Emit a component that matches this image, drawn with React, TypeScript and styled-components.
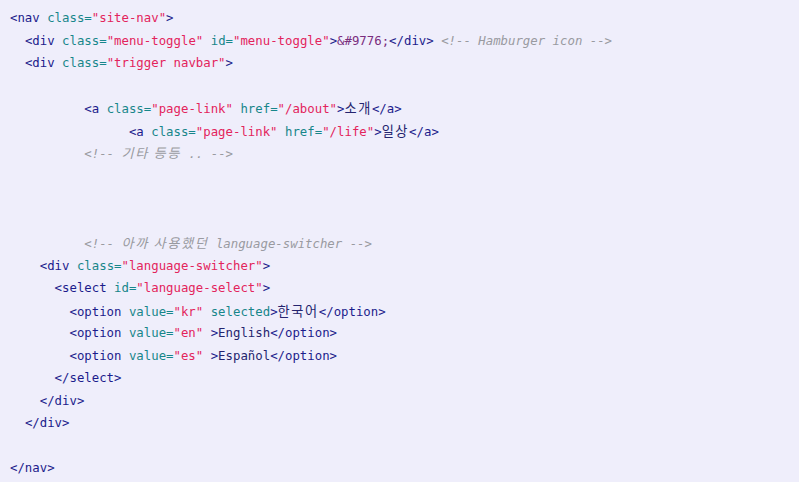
import React from "react";
import styled, { createGlobalStyle } from "styled-components";

const Global = createGlobalStyle`
  html, body { margin: 0; padding: 0; background: #efeefb; }
`;

const Pre = styled.pre`
  margin: 0;
  padding: 7px 10px 0 10px;
  min-height: 482px;
  box-sizing: border-box;
  background: #efeefb;
  font-family: "DejaVu Sans Mono", "Liberation Mono", "Noto Sans CJK KR", monospace;
  font-size: 12.35px;
  color: #1f1f7a;
`;

const Line = styled.div`
  height: 22.5px;
  line-height: 22.5px;
  white-space: pre;
`;

const Tag = styled.span`color: #1c1c8c;`;
const Attr = styled.span`color: #17868a;`;
const Val = styled.span`color: #e3245c;`;
const Ent = styled.span`color: #7a2d7e;`;
const Txt = styled.span`color: #24246e;`;
const Comment = styled.span`color: #999aa0; font-style: italic;`;
const Ko = styled.span`
  font-family: "Noto Sans CJK KR", sans-serif;
  letter-spacing: 1.6px;
  font-size: 13.2px;
`;

type Tok = [string, string];

const lines: Tok[][] = [
  [["t", "<nav "], ["a", "class="], ["v", "\"site-nav\""], ["t", ">"]],
  [["s", "  "], ["t", "<div "], ["a", "class="], ["v", "\"menu-toggle\""], ["s", " "], ["a", "id="], ["v", "\"menu-toggle\""], ["t", ">"], ["e", "&#9776;"], ["t", "</div>"], ["s", " "], ["c", "<!-- Hamburger icon -->"]],
  [["s", "  "], ["t", "<div "], ["a", "class="], ["v", "\"trigger navbar\""], ["t", ">"]],
  [],
  [["s", "          "], ["t", "<a "], ["a", "class="], ["v", "\"page-link\""], ["s", " "], ["a", "href="], ["v", "\"/about\""], ["t", ">"], ["k", "소개"], ["t", "</a>"]],
  [["s", "                "], ["t", "<a "], ["a", "class="], ["v", "\"page-link\""], ["s", " "], ["a", "href="], ["v", "\"/life\""], ["t", ">"], ["k", "일상"], ["t", "</a>"]],
  [["s", "          "], ["c", "<!-- "], ["ck", "기타 등등"], ["c", " .. -->"]],
  [],
  [],
  [],
  [["s", "          "], ["c", "<!-- "], ["ck", "아까 사용했던"], ["c", " language-switcher -->"]],
  [["s", "    "], ["t", "<div "], ["a", "class="], ["v", "\"language-switcher\""], ["t", ">"]],
  [["s", "      "], ["t", "<select "], ["a", "id="], ["v", "\"language-select\""], ["t", ">"]],
  [["s", "        "], ["t", "<option "], ["a", "value="], ["v", "\"kr\""], ["s", " "], ["a", "selected"], ["t", ">"], ["k", "한국어"], ["t", "</option>"]],
  [["s", "        "], ["t", "<option "], ["a", "value="], ["v", "\"en\""], ["s", " "], ["t", ">"], ["x", "English"], ["t", "</option>"]],
  [["s", "        "], ["t", "<option "], ["a", "value="], ["v", "\"es\""], ["s", " "], ["t", ">"], ["x", "Español"], ["t", "</option>"]],
  [["s", "      "], ["t", "</select>"]],
  [["s", "    "], ["t", "</div>"]],
  [["s", "  "], ["t", "</div>"]],
  [],
  [["t", "</nav>"]],
];

function render(tok: Tok, i: number) {
  const [k, s] = tok;
  switch (k) {
    case "t": return <Tag key={i}>{s}</Tag>;
    case "a": return <Attr key={i}>{s}</Attr>;
    case "v": return <Val key={i}>{s}</Val>;
    case "e": return <Ent key={i}>{s}</Ent>;
    case "c": return <Comment key={i}>{s}</Comment>;
    case "ck": return <Comment key={i}><Ko>{s}</Ko></Comment>;
    case "k": return <Txt key={i}><Ko>{s}</Ko></Txt>;
    case "x": return <Txt key={i}>{s}</Txt>;
    default: return <span key={i}>{s}</span>;
  }
}

export default function App() {
  return (
    <>
      <Global />
      <Pre>
        {lines.map((l, i) => (
          <Line key={i}>{l.length ? l.map(render) : " "}</Line>
        ))}
      </Pre>
    </>
  );
}
